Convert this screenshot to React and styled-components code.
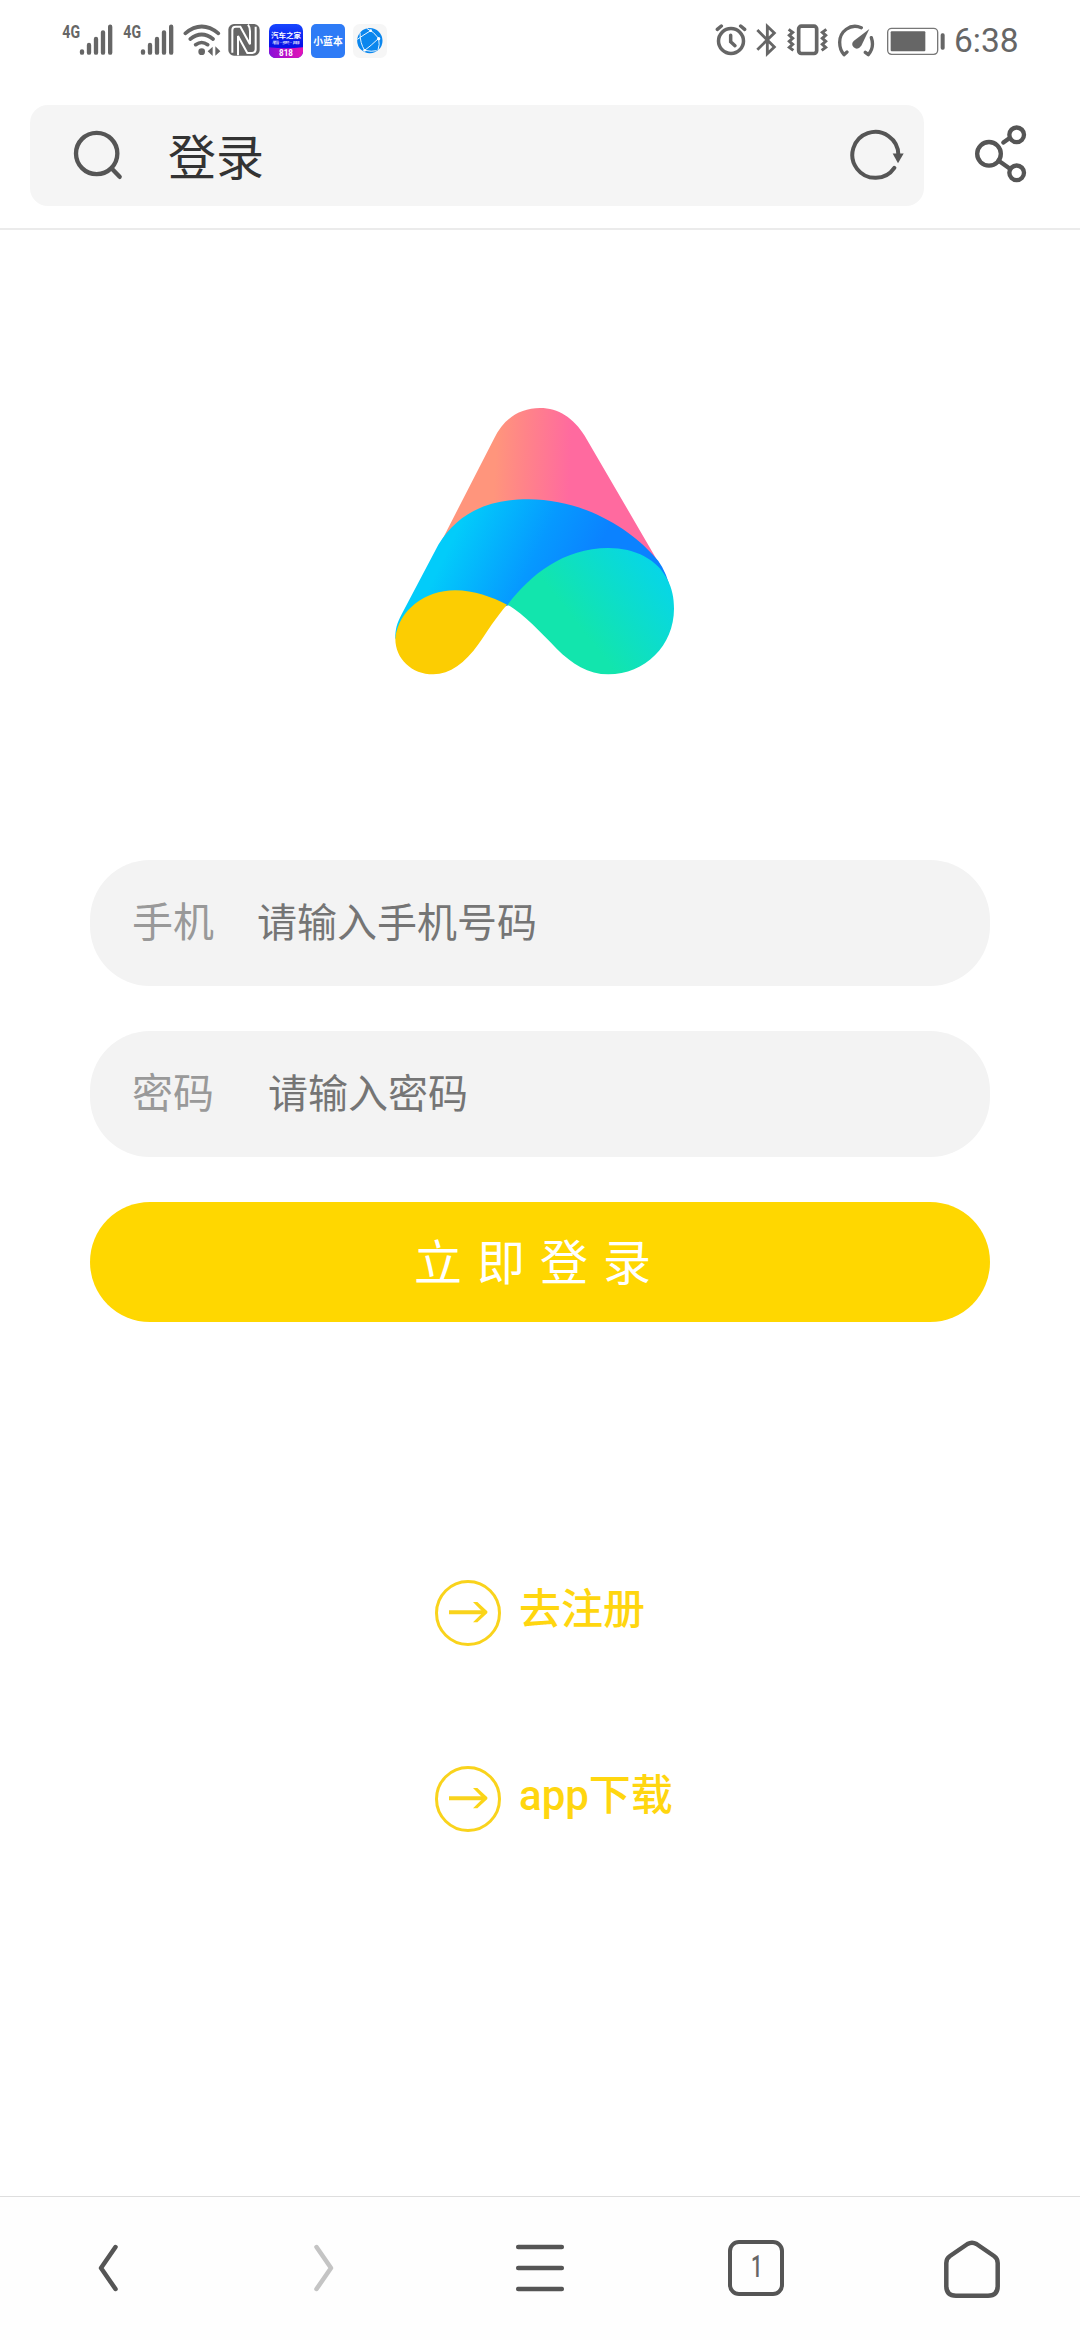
import React from 'react'
import styled, { createGlobalStyle } from 'styled-components'

const GlobalStyle = createGlobalStyle`
  * {
    box-sizing: border-box;
  }
  body {
    margin: 0;
    background: #fff;
    font-family: Roboto, "Noto Sans CJK SC", sans-serif;
  }
`;

const Signal = () => (
  <StatusIcon $w={51} $ml={0} viewBox="36 0 153 180">
    <text x="37" y="83" fontSize="56" fontWeight="700" textLength="53" lengthAdjust="spacingAndGlyphs">4G</text>
    <g stroke="#666" strokeWidth="13" strokeLinecap="round">
      <path d="M96 124v4M117 105v23M138 87v41M159 67v61M180.500 50v78" />
    </g>
  </StatusIcon>
);

const Wifi = () => (
  <StatusIcon $w={38} $ml={9} viewBox="396 0 114 180">
    <g fill="none" stroke="#666" strokeWidth="11" strokeLinecap="round">
      <path d="M403 70Q452 29 502 70M418 87Q452 60 486 87M434 104Q452 91 470 104" />
    </g>
    <circle cx="452" cy="125" r="10" />
    <path d="M470 124l15-14v28zM493 109l15 15-15 13z" />
  </StatusIcon>
);

const Nfc = () => (
  <StatusIcon $w={32} $ml={7} viewBox="24 0 96 180">
    <rect x="25" y="42" width="94" height="95" rx="17" />
    <path d="M37 128V60Q37 50 47 50H61L90 103V64Q90 52 84 44M54 136V78L82 129H97Q107 128 107 118V50" fill="none" stroke="#fff" strokeWidth="6" />
  </StatusIcon>
);

const AutoHome = () => (
  <StatusIcon $w={34} $ml={9} viewBox="147 0 102 180">
    <defs>
      <linearGradient id="auto" x1="0" y1="0" x2="0" y2="1">
        <stop offset="0" stopColor="#1747ff" />
        <stop offset=".6" stopColor="#0712e8" />
      </linearGradient>
      <linearGradient id="sale" x1="0" y1="0" x2="1" y2="0">
        <stop offset="0" stopColor="#8a10d8" />
        <stop offset="1" stopColor="#e512b5" />
      </linearGradient>
      <clipPath id="autoClip"><rect x="147" y="42" width="102" height="102" rx="20" /></clipPath>
    </defs>
    <g clipPath="url(#autoClip)">
      <rect x="147" y="42" width="102" height="102" fill="url(#auto)" />
      <path d="M147 112q50 6 102 0v34H147z" fill="url(#sale)" />
    </g>
    <AppText x="198" y="85" fontSize="22" textLength="90">汽车之家</AppText>
    <AppText x="198" y="102" fontSize="11" textLength="84" opacity=".75">看·买·用</AppText>
    <AppText x="198" y="138" fontSize="28" textLength="42">818</AppText>
  </StatusIcon>
);

const BlueBook = () => (
  <StatusIcon $w={34} $ml={8} viewBox="273 0 102 180">
    <rect x="273" y="42" width="102" height="102" rx="15" fill="#2e7bf6" />
    <AppText x="324" y="105" fontSize="30" textLength="88">小蓝本</AppText>
  </StatusIcon>
);

const Globe = () => (
  <StatusIcon $w={34} $ml={8} viewBox="399 0 102 180">
    <rect x="399" y="42" width="102" height="102" rx="20" fill="#f6f6f6" />
    <circle cx="449.500" cy="92" r="38" fill="#0b87ee" />
    <g fill="none" stroke="#e9f6ff" strokeWidth="3">
      <path d="M440 55Q462 65 476 85Q480 105 474 120M412 88Q432 74 452 62M476 85Q452 108 434 121M420 68Q420 100 434 121Q455 126 470 122" />
    </g>
    <g fill="#fff">
      <circle cx="452" cy="62" r="4" /><circle cx="476" cy="86" r="5" /><circle cx="434" cy="121" r="4" />
    </g>
  </StatusIcon>
);

const Alarm = () => (
  <StatusIcon $w={32} $ml={0} viewBox="39 0 96 180">
    <g fill="none" stroke="#666" strokeWidth="10.500" strokeLinecap="round">
      <circle cx="87" cy="93" r="37.500" />
      <path d="M86 76v19l13 12" />
      <path d="M46 58l12-10M116 48l12 10" />
    </g>
  </StatusIcon>
);

const Bluetooth = () => (
  <StatusIcon $w={21} $ml={9} viewBox="165 0 63 180">
    <path d="M169 60l51 51-21 20V49l21 20-51 50" fill="none" stroke="#666" strokeWidth="8.500" />
  </StatusIcon>
);

const Vibrate = () => (
  <StatusIcon $w={41} $ml={10} viewBox="258 0 123 180">
    <g fill="none" stroke="#666">
      <rect x="293" y="48.500" width="54" height="82" rx="8" strokeWidth="11" />
      <path d="M263 58l12 9-10 9 10 9-10 9 10 9-10 9 12 9M376 58l-12 9 10 9-10 9 10 9-10 9 10 9-12 9" strokeWidth="9" />
    </g>
  </StatusIcon>
);

const Gauge = () => (
  <StatusIcon $w={38} $ml={9} viewBox="408 0 114 180">
    <g fill="none" stroke="#666" strokeWidth="10" strokeLinecap="round" strokeLinejoin="round">
      <path d="M481 53C447 39 416 65 416 97Q416 120 429 134L438 126M511 83Q521 112 502 134L493 127" />
    </g>
    <path d="M505 57L481 107Q470 122 458 112Q449 102 458 93z" />
  </StatusIcon>
);

const Battery = () => (
  <StatusIcon $w={58} $ml={12} viewBox="558 0 174 180">
    <rect x="560" y="55" width="150" height="78" rx="12" fill="none" stroke="#777" strokeWidth="4" />
    <rect x="569" y="64" width="104" height="60" rx="3" />
    <rect x="719" y="70" width="12" height="49" rx="5" />
  </StatusIcon>
);

const Logo = () => (
  <svg width="280" height="267" viewBox="75 53 840 801">
    <defs>
      <linearGradient id="pink" gradientUnits="userSpaceOnUse" x1="375" y1="230" x2="600" y2="240">
        <stop offset="0" stopColor="#ff957c" />
        <stop offset=".4" stopColor="#ff8389" />
        <stop offset="1" stopColor="#ff6a9f" />
      </linearGradient>
      <linearGradient id="blue" gradientUnits="userSpaceOnUse" x1="255" y1="430" x2="620" y2="610">
        <stop offset="0" stopColor="#02ccfa" />
        <stop offset=".6" stopColor="#0699ff" />
        <stop offset="1" stopColor="#0b82ff" />
      </linearGradient>
      <linearGradient id="green" gradientUnits="userSpaceOnUse" x1="620" y1="700" x2="850" y2="520">
        <stop offset="0" stopColor="#12e5ad" />
        <stop offset="1" stopColor="#07d6e6" />
      </linearGradient>
    </defs>
    <path fill="url(#pink)" d="M190 500L372 145C401 84 451 53 510 53C565 53 611 83 644 136L885 550L500 480Z" />
    <path fill="url(#blue)" d="M76 745C76 715 81 699 95 672L205 463C262 372 346 327 475 327C640 327 780 415 850 495Q880 524 897 580L715 640 415 645 200 720Z" />
    <path fill="#fccd02" d="M76 745C85 660 165 600 255 600C312 600 365 620 411 643C380 678 350 725 325 762C285 818 240 852 190 852C125 852 76 805 76 745Z" />
    <path fill="url(#green)" d="M413 643C480 555 580 473 715 473C795 473 863 507 893 569C906 595 912 622 912 655C912 765 825 852 715 852C655 852 605 820 560 775C505 720 465 675 413 643Z" />
  </svg>
);

const ArrowCircle = () => (
  <svg width="66" height="66" viewBox="0 0 198 198" fill="none" stroke="#f9d31c">
    <circle cx="99" cy="99" r="94.500" strokeWidth="9" />
    <path d="M42 96.500H150" strokeWidth="12" />
    <path d="M114 66h13l30 28v5l-30 28h-13l30-30z" fill="#fbd518" stroke="none" />
  </svg>
);

const App = () => {
  return (
    <Screen>
      <GlobalStyle />
      <StatusBar>
        <StatusGroup>
          <Signal />
          <Spacer />
          <Signal />
          <Wifi />
          <Nfc />
          <AutoHome />
          <BlueBook />
          <Globe />
        </StatusGroup>
        <StatusGroup>
          <Alarm />
          <Bluetooth />
          <Vibrate />
          <Gauge />
          <Battery />
          <Time>6:38</Time>
        </StatusGroup>
      </StatusBar>

      <Header>
        <SearchBox>
          <HeaderIcon width="50" viewBox="160 91.5 150 210">
            <circle cx="231" cy="189" r="62" />
            <path d="M276 234l24 25" />
          </HeaderIcon>
          <Title>登录</Title>
          <HeaderIcon width="56" viewBox="147 91.5 168 210">
            <path d="M295 192A69 69 0 1 0 283 232" strokeWidth="12" />
            <path d="M278 189h33l-17 29z" fill="#555" stroke="none" />
          </HeaderIcon>
        </SearchBox>
        <HeaderIcon width="54" viewBox="522 91.500 162 210">
          <circle cx="567" cy="190" r="35.500" />
          <circle cx="650" cy="133" r="22" />
          <circle cx="650" cy="247" r="22" />
          <path d="M610 156l18-13M596 211l34 24" />
        </HeaderIcon>
      </Header>

      <Content>
        <Logo />
        <Form>
          <Field>
            <Label>手机</Label>
            <Input $indent={43} type="text" placeholder="请输入手机号码" />
          </Field>
          <Field>
            <Label>密码</Label>
            <Input $indent={54} type="password" placeholder="请输入密码" />
          </Field>
          <Button>立即登录</Button>
        </Form>
        <Links>
          <LinkRow>
            <ArrowCircle />
            <span>去注册</span>
          </LinkRow>
          <LinkRow>
            <ArrowCircle />
            <span>app下载</span>
          </LinkRow>
        </Links>
      </Content>

      <NavBar>
        <NavIcon width="30" height="60" viewBox="0 0 30 60">
          <path d="M22.500 9L8 30L22.500 51" />
        </NavIcon>
        <NavIcon $muted width="30" height="60" viewBox="0 0 30 60">
          <path d="M7.500 9L22 30L7.500 51" />
        </NavIcon>
        <NavIcon width="60" height="60" viewBox="0 0 60 60">
          <path d="M8.200 9H51.800M8.200 30H51.800M8.200 51H51.800" />
        </NavIcon>
        <TabCount><span>1</span></TabCount>
        <NavIcon width="60" height="60" viewBox="0 0 60 60">
          <path d="M4.300 25Q4.300 20.500 8 18L25.500 6Q30 3.500 34.500 6L52 18Q55.700 20.500 55.700 25V48Q55.700 57.700 46 57.700H14Q4.300 57.700 4.300 48Z" />
        </NavIcon>
      </NavBar>
    </Screen>
  )
}

export default App;

const Screen = styled.div`
  width: 1080px;
  height: 2340px;
  display: flex;
  flex-direction: column;
  overflow: hidden;
`;

const StatusBar = styled.div`
  height: 105px;
  padding: 10px 62px 0;
  display: flex;
  justify-content: space-between;
  align-items: flex-start;
`;

const StatusGroup = styled.div`
  display: flex;
  &:last-child {
    margin-right: -1px;
  }
`;

const StatusIcon = styled.svg`
  width: ${({ $w }) => $w}px;
  height: 60px;
  margin-left: ${({ $ml }) => $ml}px;
  fill: #666;
`;

const Spacer = styled.div`
  width: 10px;
`;

const AppText = styled.text.attrs({ textAnchor: 'middle', lengthAdjust: 'spacingAndGlyphs' })`
  fill: #fff;
  font-weight: 700;
`;

const Time = styled.div`
  width: 65px;
  margin-left: 9px;
  font-size: 33.5px;
  line-height: 62px;
  color: #666;
`;

const Header = styled.header`
  height: 125px;
  display: flex;
  align-items: flex-start;
  padding: 0 52px 0 30px;
  justify-content: space-between;
  border-bottom: 2px solid #ebebeb;

  > svg {
    margin-top: 15.500px;
  }
`;

const SearchBox = styled.div`
  width: 894px;
  height: 101px;
  padding: 0 19px 0 43px;
  display: flex;
  align-items: center;
  border-radius: 18px;
  background: #f5f5f5;
`;

const HeaderIcon = styled.svg`
  height: 70px;
  fill: none;
  stroke: #555;
  stroke-width: 13px;
  stroke-linecap: round;
`;

const Title = styled.h1`
  flex: 1;
  margin: 0 0 0 45px;
  padding-top: 6px;
  font-size: 48px;
  font-weight: 400;
  line-height: 70px;
  color: #333;
`;

const Content = styled.main`
  flex: 1;
  display: flex;
  flex-direction: column;
  padding: 178px 90px 0;

  > svg {
    margin-left: 305px;
  }
`;

const Form = styled.div`
  margin-top: 185px;
  display: flex;
  flex-direction: column;
  gap: 45px;
`;

const Field = styled.label`
  height: 126px;
  padding: 0 42px;
  display: flex;
  align-items: center;
  border-radius: 60px;
  background: #f3f3f3;
`;

const Label = styled.span`
  padding-bottom: 1px;
  font-size: 41px;
  line-height: 60px;
  color: #999;
`;

const Input = styled.input`
  flex: 1;
  min-width: 0;
  margin-left: ${({ $indent }) => $indent}px;
  padding: 0;
  border: none;
  outline: none;
  background: transparent;
  font-family: inherit;
  font-size: 40px;
  &::placeholder {
    color: #757575;
  }
`;

const Button = styled.button`
  height: 120px;
  padding: 0 0 7px;
  border: none;
  border-radius: 60px;
  background: #ffd700;
  color: #fff;
  font-family: inherit;
  font-size: 48px;
  letter-spacing: 15px;
  cursor: pointer;
`;

const Links = styled.div`
  margin: 258px 0 0 345px;
  display: flex;
  flex-direction: column;
  gap: 120px;
`;

const LinkRow = styled.a`
  height: 66px;
  display: flex;
  gap: 18px;
  color: #ffd60f;
  font-size: 42px;
  font-weight: 500;
  line-height: 60px;
  white-space: nowrap;
`;

const NavBar = styled.nav`
  height: 144px;
  padding-bottom: 1px;
  display: grid;
  grid-template-columns: repeat(5, 1fr);
  place-items: center;
  border-top: 1px solid #dedede;
  background: #fefefe;
`;

const NavIcon = styled.svg`
  fill: none;
  stroke: ${({ $muted }) => ($muted ? "#c4c4c4" : "#555")};
  stroke-width: 4.500px;
  stroke-linecap: round;
  stroke-linejoin: round;
`;

const TabCount = styled.div`
  width: 56px;
  height: 56px;
  border: 4.500px solid #555;
  border-radius: 11px;
  display: flex;
  align-items: center;
  justify-content: center;
  color: #666;
  font-size: 31px;
  font-weight: 500;
  line-height: 46px;

  span {
    margin: 0 0 2px 2px;
    transform: scaleX(0.65);
  }
`;
